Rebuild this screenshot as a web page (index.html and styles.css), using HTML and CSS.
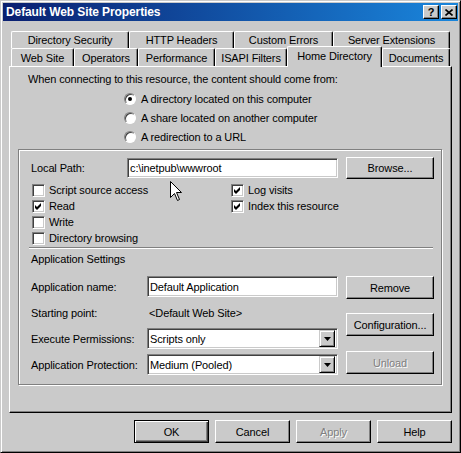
FILE: index.html
```html
<!DOCTYPE html>
<html>
<head>
<meta charset="utf-8">
<title>Default Web Site Properties</title>
<link rel="stylesheet" href="styles.css">
</head>
<body>
<div class="window">
  <div class="titlebar">
    <span class="title">Default Web Site Properties</span>
    <div class="tb-buttons">
      <span class="tb-btn tb-help">?</span>
      <span class="tb-btn tb-close"><svg width="8" height="7" viewBox="0 0 8 7"><path d="M0.5 0.5 L7.5 6.5 M7.5 0.5 L0.5 6.5" stroke="#000" stroke-width="1.6" fill="none"/></svg></span>
    </div>
  </div>

  <div class="tabs">
    <div class="tabrow back">
      <div class="tab t-ds">Directory Security</div>
      <div class="tab t-hh">HTTP Headers</div>
      <div class="tab t-ce">Custom Errors</div>
      <div class="tab t-se">Server Extensions</div>
    </div>
    <div class="tabrow front">
      <div class="tab t-ws">Web Site</div>
      <div class="tab t-op">Operators</div>
      <div class="tab t-pf">Performance</div>
      <div class="tab t-is">ISAPI Filters</div>
      <div class="tab t-hd active">Home Directory</div>
      <div class="tab t-dc">Documents</div>
    </div>
  </div>

  <div class="panel">
    <p class="intro">When connecting to this resource, the content should come from:</p>
    <div class="radios">
      <div class="radio-row"><span class="radio checked"></span><span>A directory located on this computer</span></div>
      <div class="radio-row"><span class="radio"></span><span>A share located on another computer</span></div>
      <div class="radio-row"><span class="radio"></span><span>A redirection to a URL</span></div>
    </div>

    <div class="group">
      <div class="path-row">
        <span class="lbl lbl-path">Local Path:</span>
        <div class="field path-field">c:\inetpub\wwwroot</div>
        <div class="btn btn-side">Browse...</div>
      </div>

      <div class="checks">
        <div class="check-col col-left">
          <div class="check-row"><span class="cb"></span><span>Script source access</span></div>
          <div class="check-row"><span class="cb"><svg class="tick" width="7" height="7" viewBox="0 0 7 7"><path d="M0 2 L2 4 L6 0 L6 3 L2 7 L0 5 Z" fill="#000"/></svg></span><span>Read</span></div>
          <div class="check-row"><span class="cb"></span><span>Write</span></div>
          <div class="check-row"><span class="cb"></span><span>Directory browsing</span></div>
        </div>
        <div class="check-col col-right">
          <div class="check-row"><span class="cb"><svg class="tick" width="7" height="7" viewBox="0 0 7 7"><path d="M0 2 L2 4 L6 0 L6 3 L2 7 L0 5 Z" fill="#000"/></svg></span><span>Log visits</span></div>
          <div class="check-row"><span class="cb"><svg class="tick" width="7" height="7" viewBox="0 0 7 7"><path d="M0 2 L2 4 L6 0 L6 3 L2 7 L0 5 Z" fill="#000"/></svg></span><span>Index this resource</span></div>
        </div>
      </div>

      <div class="sep"></div>
      <div class="section-title">Application Settings</div>

      <div class="app">
        <div class="app-fields">
          <div class="app-row"><span class="lbl lbl-app">Application name:</span><div class="field app-field">Default Application</div></div>
          <div class="app-row"><span class="lbl lbl-app">Starting point:</span><div class="plain app-field">&lt;Default Web Site&gt;</div></div>
          <div class="app-row"><span class="lbl lbl-app">Execute Permissions:</span><div class="field select app-field"><span>Scripts only</span><span class="drop"><svg width="7" height="4" viewBox="0 0 7 4"><path d="M0 0 H7 L3.5 4 Z" fill="#000"/></svg></span></div></div>
          <div class="app-row"><span class="lbl lbl-app">Application Protection:</span><div class="field select app-field"><span>Medium (Pooled)</span><span class="drop"><svg width="7" height="4" viewBox="0 0 7 4"><path d="M0 0 H7 L3.5 4 Z" fill="#000"/></svg></span></div></div>
        </div>
        <div class="app-buttons">
          <div class="btn btn-side b-remove">Remove</div>
          <div class="btn btn-side b-config">Configuration...</div>
          <div class="btn btn-side b-unload disabled">Unload</div>
        </div>
      </div>
    </div>
  </div>

  <div class="footer">
    <div class="btn btn-foot default">OK</div>
    <div class="btn btn-foot">Cancel</div>
    <div class="btn btn-foot disabled">Apply</div>
    <div class="btn btn-foot">Help</div>
  </div>

  <svg class="cursor" width="13" height="21" viewBox="0 0 13 21"><path d="M0.5 0.5 V16.5 L4.5 12.5 L7.5 19.5 L9.5 18.5 L6.5 11.5 H11.5 Z" fill="#fff" stroke="#000" stroke-width="1"/></svg>
</div>
</body>
</html>
```

FILE: styles.css
```css
:root {
  --face: #cacaca;
  --shadow: #808080;
  --dark: #404040;
}

html, body {
  margin: 0;
  padding: 0;
  background: var(--face);
}

.window {
  position: relative;
  width: 461px;
  height: 453px;
  box-sizing: border-box;
  background: var(--face);
  border: 1px solid;
  border-color: var(--face) #000 #000 var(--face);
  box-shadow: inset 1px 1px #fff, inset -1px -1px var(--shadow);
  padding: 2px;
  font-family: "Liberation Sans", Arial, sans-serif;
  font-size: 11px;
  letter-spacing: -0.12px;
  color: #000;
}

/* Title bar */
.titlebar {
  height: 18px;
  display: flex;
  align-items: center;
  justify-content: space-between;
  padding: 0 1px 0 3px;
  background: linear-gradient(to right, #0a1f70, #1a86dc);
}

.title {
  color: #fff;
  font-weight: bold;
  font-size: 12px;
  letter-spacing: -0.1px;
}

.tb-buttons {
  display: flex;
  gap: 2px;
}

.tb-btn {
  box-sizing: border-box;
  width: 16px;
  height: 14px;
  background: var(--face);
  border: 1px solid;
  border-color: #fff #000 #000 #fff;
  box-shadow: inset -1px -1px var(--shadow);
  display: flex;
  align-items: center;
  justify-content: center;
  font-weight: bold;
  font-size: 11px;
  line-height: 1;
}

/* Tabs */
.tabs {
  margin: 10px 0 0 8px;
  width: 439px;
}

.tabrow {
  display: flex;
}

.tabrow.back {
  height: 17px;
}

.tabrow.front {
  height: 18px;
  align-items: flex-end;
}

.tab {
  box-sizing: border-box;
  height: 100%;
  background: var(--face);
  border-top: 1px solid #fff;
  border-left: 1px solid #fff;
  border-right: 1px solid #000;
  box-shadow: inset -1px 0 var(--shadow);
  border-radius: 2px 2px 0 0;
  display: flex;
  align-items: center;
  justify-content: center;
  white-space: nowrap;
}

.t-ds { width: 118px; }
.t-hh { width: 105px; }
.t-ce { width: 99px; }
.t-se { width: 117px; }
.t-ws { width: 63px; }
.t-op { width: 64px; }
.t-pf { width: 77px; }
.t-is { width: 72px; }
.t-hd { width: 95px; }
.t-dc { width: 68px; }

.tab.active {
  height: 21px;
  margin-bottom: -1px;
  padding-bottom: 3px;
  position: relative;
  z-index: 1;
}

/* Panel */
.panel {
  margin-left: 6px;
  width: 443px;
  height: 347px;
  box-sizing: border-box;
  border-top: 1px solid #fff;
  border-left: 1px solid #fff;
  border-right: 1px solid #000;
  border-bottom: 1px solid #000;
  box-shadow: inset -1px -1px var(--shadow);
  overflow: hidden;
}

.intro {
  margin: 5px 0 0 18px;
  line-height: 14px;
}

.radios {
  margin: 3px 0 0 114px;
}

.radio-row {
  height: 19px;
  display: flex;
  align-items: center;
  gap: 5px;
}

.radio {
  box-sizing: border-box;
  width: 12px;
  height: 12px;
  border-radius: 50%;
  background: #fff;
  border: 1px solid;
  border-color: var(--shadow) #fff #fff var(--shadow);
  box-shadow: inset 1px 1px var(--dark);
  display: flex;
  align-items: center;
  justify-content: center;
}

.radio.checked::after {
  content: "";
  width: 4px;
  height: 4px;
  border-radius: 50%;
  background: #000;
}

/* Group box */
.group {
  margin: 3px 0 0 8px;
  width: 424px;
  height: 236px;
  box-sizing: border-box;
  border: 1px solid var(--shadow);
  box-shadow: 1px 1px 0 #fff, inset 1px 1px 0 #fff;
}

.path-row {
  display: flex;
  align-items: center;
  height: 22px;
  margin-top: 7px;
  padding-left: 12px;
}

.lbl-path {
  width: 96px;
}

.field {
  box-sizing: border-box;
  height: 20px;
  background: #fff;
  border: 1px solid;
  border-color: var(--shadow) #fff #fff var(--shadow);
  box-shadow: inset 1px 1px var(--dark), inset -1px -1px var(--face);
  padding-left: 2px;
  display: flex;
  align-items: center;
  white-space: nowrap;
}

.path-field {
  width: 211px;
}

.btn {
  box-sizing: border-box;
  background: var(--face);
  border: 1px solid;
  border-color: #fff #000 #000 #fff;
  box-shadow: inset -1px -1px var(--shadow);
  display: flex;
  align-items: center;
  justify-content: center;
  white-space: nowrap;
}

.btn.disabled {
  color: var(--shadow);
  text-shadow: 1px 1px #fff;
}

.btn-side {
  width: 88px;
  height: 23px;
  margin-left: 8px;
}

.path-row .btn-side {
  height: 22px;
}

/* Checkboxes */
.checks {
  display: flex;
  margin-top: 3px;
  padding-left: 13px;
}

.col-left {
  width: 199px;
}

.check-row {
  height: 16px;
  display: flex;
  align-items: center;
  gap: 4px;
}

.cb {
  box-sizing: border-box;
  width: 13px;
  height: 13px;
  background: #fff;
  border: 1px solid;
  border-color: var(--shadow) #fff #fff var(--shadow);
  box-shadow: inset 1px 1px var(--dark), inset -1px -1px var(--face);
  display: flex;
  align-items: center;
  justify-content: center;
}

.sep {
  margin: 1px 0 0 10px;
  width: 404px;
  height: 0;
  border-top: 1px solid var(--shadow);
  border-bottom: 1px solid #fff;
}

.section-title {
  margin-top: 3px;
  padding-left: 12px;
  line-height: 14px;
}

/* Application settings */
.app {
  display: flex;
  margin-top: 10px;
  padding-left: 12px;
}

.app-fields {
  display: flex;
  flex-direction: column;
  gap: 5px;
}

.app-row {
  height: 21px;
  display: flex;
  align-items: center;
}

.lbl-app {
  width: 116px;
}

.app-field {
  width: 191px;
  height: 21px;
}

.plain {
  box-sizing: border-box;
  padding-left: 2px;
  display: flex;
  align-items: center;
}

.select {
  justify-content: space-between;
  padding-right: 2px;
}

.drop {
  box-sizing: border-box;
  width: 16px;
  height: 17px;
  background: var(--face);
  border: 1px solid;
  border-color: var(--face) #000 #000 var(--face);
  box-shadow: inset 1px 1px #fff, inset -1px -1px var(--shadow);
  display: flex;
  align-items: center;
  justify-content: center;
}

.app-buttons {
  display: flex;
  flex-direction: column;
}

.app-buttons .btn-side {
  margin-left: 8px;
}

.b-config {
  margin-top: 14px;
}

.b-unload {
  margin-top: 15px;
}

/* Footer */
.footer {
  display: flex;
  justify-content: flex-end;
  gap: 6px;
  margin-top: 7px;
  padding-right: 6px;
}

.btn-foot {
  width: 75px;
  height: 23px;
}

.btn.default {
  border-color: #000;
  box-shadow: inset 1px 1px #fff, inset -1px -1px #404040, inset -2px -2px var(--shadow);
}

.cursor {
  position: absolute;
  left: 169px;
  top: 180px;
}
```
